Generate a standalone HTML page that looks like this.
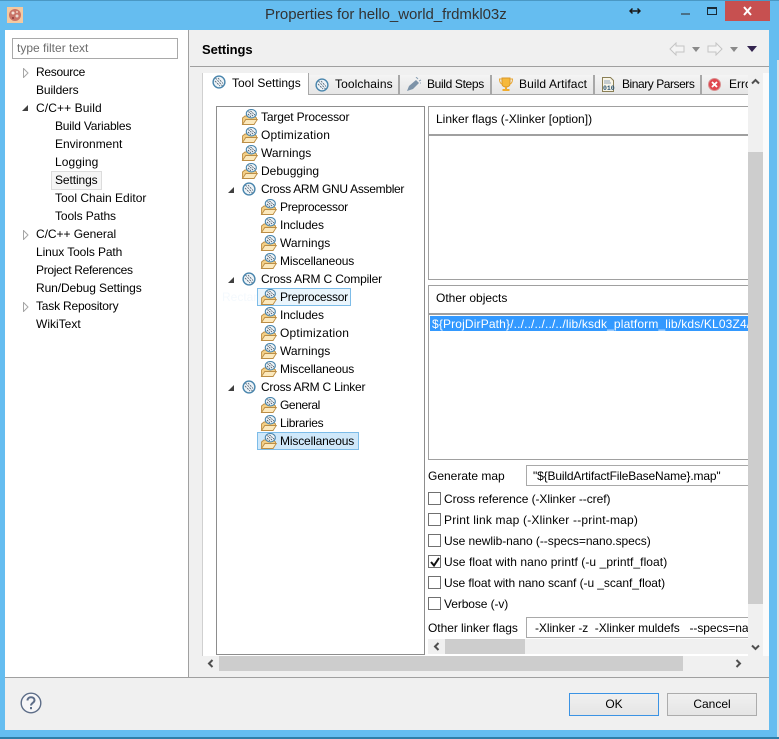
<!DOCTYPE html>
<html><head><meta charset="utf-8">
<style>
html,body{margin:0;padding:0}
body{width:779px;height:739px;overflow:hidden;position:relative;background:#65bdf0;font-family:"Liberation Sans",sans-serif;font-size:12px;color:#000}
div,span,svg{position:absolute}
.t{white-space:nowrap;line-height:18px;height:18px;font-size:12px;letter-spacing:0}
.ck{width:11px;height:11px;border:1px solid #707070;background:#fff;left:428px}
.tab{top:75px;height:19px;background:linear-gradient(#f4f4f4,#e6e6e6);border-right:2px solid #a8a8a8;border-bottom:1px solid #a8a8a8}
.tt{top:75px}
</style></head><body>
<svg width="0" height="0" style="left:0;top:0">
<defs>
<symbol id="g" viewBox="0 0 14 14"><circle cx="7" cy="7" r="5.900" fill="#eef4f8" stroke="#4a86ad" stroke-width="1.400"/><path d="M3.500 3L10.500 11M6 3L11 8.500M3 6L8 11" stroke="#5a6b7c" stroke-width=".9" stroke-dasharray="2 1"/></symbol>
<symbol id="f" viewBox="0 0 17 17"><path d="M1.500 9L4 7h9l2.500 2v1l-2.500 5.500H1.500z" fill="#f3cf86" stroke="#bc8e45" stroke-width=".9"/><path d="M1.500 15.500L4.800 10.500H16.300L13 15.500z" fill="#fce9bd" stroke="#bc8e45" stroke-width=".9"/><ellipse cx="10.300" cy="4.700" rx="5" ry="4.200" fill="#eef4f8" stroke="#4a86ad" stroke-width="1.100"/><path d="M7.500 2.500L12.500 7.500M9.500 2L14 6M7 5L10 8" stroke="#4c5a68" stroke-width=".9" stroke-dasharray="1.600 .8"/></symbol>
</defs></svg>

<div style="left:0;top:0;width:779px;height:1px;background:#4a98c4"></div>
<div style="left:0;top:737px;width:779px;height:2px;background:#2f7ea8"></div>
<div style="left:777px;top:60px;width:2px;height:677px;background:#d8dfe4"></div>

<!-- title bar -->
<svg style="left:7px;top:7px" width="16" height="16" viewBox="0 0 16 16"><rect width="16" height="16" fill="#f4c9a0"/><circle cx="8" cy="8" r="6" fill="#c97468"/><circle cx="6" cy="6" r="1.500" fill="#f3e3d8"/><circle cx="10" cy="9" r="1.500" fill="#e8d8d0"/><circle cx="6" cy="11" r="1" fill="#8a3a3a"/><circle cx="10" cy="5" r="1" fill="#f0d0c0"/></svg>
<div class="t" style="left:265px;top:6px;font-size:15px;color:#333;letter-spacing:-.05px">Properties for hello_world_frdmkl03z</div>
<svg style="left:629px;top:5px" width="12" height="12" viewBox="0 0 12 12"><path d="M1 6h10M3.500 3.500L1 6l2.500 2.500M8.500 3.500L11 6 8.500 8.500" fill="none" stroke="#1a1a1a" stroke-width="1.500"/></svg>
<div style="left:681px;top:13px;width:9px;height:2px;background:#4a7188"></div>
<div style="left:707px;top:7px;width:8px;height:5px;border:1px solid #1a2a35;border-top-width:2px"></div>
<div style="left:725px;top:1px;width:45px;height:20px;background:#c75050"></div>
<svg style="left:742px;top:6px" width="11" height="10" viewBox="0 0 11 10"><path d="M2 1l7 8M9 1L2 9" stroke="#fff" stroke-width="2"/></svg>

<!-- client -->
<div style="left:5px;top:30px;width:764px;height:700px;background:#f0f0f0"></div>
<div style="left:5px;top:30px;width:183px;height:647px;background:#fff"></div>
<div style="left:188px;top:30px;width:1px;height:647px;background:#a0a0a0"></div>
<div style="left:5px;top:677px;width:764px;height:1px;background:#a0a0a0"></div>
<div style="left:190px;top:66px;width:579px;height:1px;background:#a0a0a0"></div>

<!-- left tree -->
<div style="left:12px;top:38px;width:164px;height:19px;border:1px solid #a9a9a9;background:#fff"></div>
<div class="t" style="left:17px;top:39px;color:#6d6d6d">type filter text</div>
<svg style="left:23px;top:68px" width="6" height="10" viewBox="0 0 6 10"><path d="M.500.500L5 5 .500 9.500z" fill="#fff" stroke="#a6a6a6"/></svg>
<svg style="left:22px;top:104px" width="7" height="7" viewBox="0 0 7 7"><path d="M0 7L6 1v6z" fill="#404040"/></svg>
<svg style="left:23px;top:230px" width="6" height="10" viewBox="0 0 6 10"><path d="M.500.500L5 5 .500 9.500z" fill="#fff" stroke="#a6a6a6"/></svg>
<svg style="left:23px;top:302px" width="6" height="10" viewBox="0 0 6 10"><path d="M.500.500L5 5 .500 9.500z" fill="#fff" stroke="#a6a6a6"/></svg>
<div style="left:51px;top:171px;width:49px;height:17px;background:#f5f5f5;border:1px solid #dcdcdc"></div>
<div class="t" style="left:36px;top:63px;letter-spacing:-.3px">Resource</div>
<div class="t" style="left:36px;top:81px;letter-spacing:-.1px">Builders</div>
<div class="t" style="left:36px;top:99px;letter-spacing:.1px">C/C++ Build</div>
<div class="t" style="left:55px;top:117px;letter-spacing:-.2px">Build Variables</div>
<div class="t" style="left:55px;top:135px">Environment</div>
<div class="t" style="left:55px;top:153px;letter-spacing:.1px">Logging</div>
<div class="t" style="left:55px;top:171px;letter-spacing:-.1px">Settings</div>
<div class="t" style="left:55px;top:189px">Tool Chain Editor</div>
<div class="t" style="left:55px;top:207px;letter-spacing:-.1px">Tools Paths</div>
<div class="t" style="left:36px;top:225px;letter-spacing:-.05px">C/C++ General</div>
<div class="t" style="left:36px;top:243px;letter-spacing:-.1px">Linux Tools Path</div>
<div class="t" style="left:36px;top:261px;letter-spacing:-.3px">Project References</div>
<div class="t" style="left:36px;top:279px;letter-spacing:-.1px">Run/Debug Settings</div>
<div class="t" style="left:36px;top:297px;letter-spacing:-.2px">Task Repository</div>
<div class="t" style="left:36px;top:315px">WikiText</div>

<!-- header -->
<div class="t" style="left:202px;top:41px;font-size:13px;font-weight:bold;letter-spacing:-.1px">Settings</div>
<svg style="left:669px;top:42px" width="16" height="14" viewBox="0 0 16 14"><path d="M1 7l6-6v3h8v6H7v3z" fill="#f4f4f4" stroke="#c4c4c4"/></svg>
<svg style="left:692px;top:47px" width="8" height="5" viewBox="0 0 8 5"><path d="M0 0h8L4 5z" fill="#8a8a8a"/></svg>
<svg style="left:707px;top:42px" width="16" height="14" viewBox="0 0 16 14"><path d="M15 7L9 1v3H1v6h8v3z" fill="#f4f4f4" stroke="#c4c4c4"/></svg>
<svg style="left:730px;top:47px" width="8" height="5" viewBox="0 0 8 5"><path d="M0 0h8L4 5z" fill="#8a8a8a"/></svg>
<svg style="left:747px;top:46px" width="10" height="6" viewBox="0 0 10 6"><path d="M0 0h10L5 6z" fill="#33244f"/></svg>

<!-- tabs -->
<div style="left:203px;top:95px;width:545px;height:561px;background:#fff"></div>
<div style="left:202px;top:73px;width:1px;height:583px;background:#d0d0d0"></div>
<div style="left:203px;top:73px;width:105px;height:23px;background:#fff"></div>
<div style="left:308px;top:73px;width:1px;height:22px;background:#a8a8a8"></div>
<div class="tab" style="left:309px;width:89px"></div>
<div class="tab" style="left:400px;width:90px"></div>
<div class="tab" style="left:492px;width:101px"></div>
<div class="tab" style="left:595px;width:105px"></div>
<div class="tab" style="left:702px;width:46px;border-right:0"></div>
<svg style="left:212px;top:75px" width="14" height="14"><use href="#g"/></svg>
<svg style="left:315px;top:78px" width="14" height="14"><use href="#g"/></svg>
<svg style="left:406px;top:77px" width="16" height="15" viewBox="0 0 16 15"><path d="M1 14l2-5 7-6 3 3-6 6z" fill="#7d93a8"/><path d="M11 2l1-1M13 4l2-1M14 6h1M10 1l1-1" stroke="#8aa0b4"/></svg>
<svg style="left:498px;top:77px" width="16" height="15" viewBox="0 0 16 15"><path d="M4 1h8v6c0 2-2 3-4 3S4 9 4 7z" fill="#f6b93b" stroke="#d9982a"/><path d="M4 2H1.500c0 3 1 4.500 2.500 5M12 2h2.500c0 3-1 4.500-2.500 5" fill="none" stroke="#e8a632"/><path d="M7 10h2v2H7zM4.500 12h7v2h-7z" fill="#f0ac2e"/></svg>
<svg style="left:601px;top:77px" width="15" height="15" viewBox="0 0 15 15"><path d="M1.500.500h8l3 3v11h-11z" fill="#f8f5e8" stroke="#8a7f55"/><path d="M3 4h6M3 6h7" stroke="#8fa3b8"/><text x="2" y="13" font-size="6.500" font-family="Liberation Mono" fill="#27506f" font-weight="bold">010</text></svg>
<svg style="left:708px;top:78px" width="13" height="13" viewBox="0 0 13 13"><circle cx="6.500" cy="6.500" r="6" fill="#e0464f" stroke="#d89090"/><path d="M4 4l5 5M9 4L4 9" stroke="#fff" stroke-width="1.800"/></svg>
<div class="t" style="left:232px;top:74px">Tool Settings</div>
<div class="t tt" style="left:335px;letter-spacing:.1px">Toolchains</div>
<div class="t tt" style="left:427px;letter-spacing:-.35px">Build Steps</div>
<div class="t tt" style="left:519px;letter-spacing:.1px">Build Artifact</div>
<div class="t tt" style="left:622px;letter-spacing:-.45px">Binary Parsers</div>
<div class="t tt" style="left:729px;width:19px;overflow:hidden">Errors</div>

<!-- middle tree -->
<div style="left:216px;top:106px;width:207px;height:547px;border:1px solid #8d8d8d;background:#fff"></div>
<div class="t" style="left:222px;top:288px;color:#f4f9fd">Rectangular Snip</div>
<div style="left:257px;top:288px;width:92px;height:16px;border:1px solid #7dbce8;background:#eaf5fc"></div>
<div style="left:257px;top:432px;width:100px;height:16px;border:1px solid #7dbce8;background:#cfe8fa"></div>

<svg style="left:241px;top:109px" width="17" height="17"><use href="#f"/></svg>
<svg style="left:241px;top:127px" width="17" height="17"><use href="#f"/></svg>
<svg style="left:241px;top:145px" width="17" height="17"><use href="#f"/></svg>
<svg style="left:241px;top:163px" width="17" height="17"><use href="#f"/></svg>
<svg style="left:242px;top:182px" width="14" height="14"><use href="#g"/></svg>
<svg style="left:260px;top:199px" width="17" height="17"><use href="#f"/></svg>
<svg style="left:260px;top:217px" width="17" height="17"><use href="#f"/></svg>
<svg style="left:260px;top:235px" width="17" height="17"><use href="#f"/></svg>
<svg style="left:260px;top:253px" width="17" height="17"><use href="#f"/></svg>
<svg style="left:242px;top:272px" width="14" height="14"><use href="#g"/></svg>
<svg style="left:260px;top:289px" width="17" height="17"><use href="#f"/></svg>
<svg style="left:260px;top:307px" width="17" height="17"><use href="#f"/></svg>
<svg style="left:260px;top:325px" width="17" height="17"><use href="#f"/></svg>
<svg style="left:260px;top:343px" width="17" height="17"><use href="#f"/></svg>
<svg style="left:260px;top:361px" width="17" height="17"><use href="#f"/></svg>
<svg style="left:242px;top:380px" width="14" height="14"><use href="#g"/></svg>
<svg style="left:260px;top:397px" width="17" height="17"><use href="#f"/></svg>
<svg style="left:260px;top:415px" width="17" height="17"><use href="#f"/></svg>
<svg style="left:260px;top:433px" width="17" height="17"><use href="#f"/></svg>
<svg style="left:228px;top:186px" width="7" height="7" viewBox="0 0 7 7"><path d="M0 7L6 1v6z" fill="#404040"/></svg>
<svg style="left:228px;top:276px" width="7" height="7" viewBox="0 0 7 7"><path d="M0 7L6 1v6z" fill="#404040"/></svg>
<svg style="left:228px;top:384px" width="7" height="7" viewBox="0 0 7 7"><path d="M0 7L6 1v6z" fill="#404040"/></svg>

<div class="t" style="left:261px;top:108px;letter-spacing:-.15px">Target Processor</div>
<div class="t" style="left:261px;top:126px;letter-spacing:.2px">Optimization</div>
<div class="t" style="left:261px;top:144px">Warnings</div>
<div class="t" style="left:261px;top:162px">Debugging</div>
<div class="t" style="left:261px;top:180px;letter-spacing:-.3px">Cross ARM GNU Assembler</div>
<div class="t" style="left:280px;top:198px;letter-spacing:-.3px">Preprocessor</div>
<div class="t" style="left:280px;top:216px;letter-spacing:-.1px">Includes</div>
<div class="t" style="left:280px;top:234px">Warnings</div>
<div class="t" style="left:280px;top:252px;letter-spacing:-.15px">Miscellaneous</div>
<div class="t" style="left:261px;top:270px;letter-spacing:-.15px">Cross ARM C Compiler</div>
<div class="t" style="left:280px;top:288px;letter-spacing:-.3px">Preprocessor</div>
<div class="t" style="left:280px;top:306px;letter-spacing:-.1px">Includes</div>
<div class="t" style="left:280px;top:324px;letter-spacing:.2px">Optimization</div>
<div class="t" style="left:280px;top:342px">Warnings</div>
<div class="t" style="left:280px;top:360px;letter-spacing:-.15px">Miscellaneous</div>
<div class="t" style="left:261px;top:378px;letter-spacing:-.25px">Cross ARM C Linker</div>
<div class="t" style="left:280px;top:396px;letter-spacing:-.4px">General</div>
<div class="t" style="left:280px;top:414px;letter-spacing:-.3px">Libraries</div>
<div class="t" style="left:280px;top:432px;letter-spacing:-.15px">Miscellaneous</div>

<!-- right pane -->
<div style="left:428px;top:106px;width:320px;height:172px;border:1px solid #a0a0a0;border-right:0"></div>
<div style="left:429px;top:134px;width:319px;height:2px;background:#a0a0a0"></div>
<div class="t" style="left:436px;top:110px">Linker flags (-Xlinker [option])</div>
<div style="left:428px;top:285px;width:320px;height:173px;border:1px solid #a0a0a0;border-right:0"></div>
<div style="left:429px;top:313px;width:319px;height:2px;background:#a0a0a0"></div>
<div class="t" style="left:436px;top:289px">Other objects</div>
<div style="left:430px;top:316px;width:318px;height:15px;background:#3399ff"></div>
<div class="t" style="left:432px;top:315px;color:#fff;width:316px;overflow:hidden;letter-spacing:.15px">${ProjDirPath}/../../../../../lib/ksdk_platform_lib/kds/KL03Z4/debug/libksdk_platform.a</div>

<div class="t" style="left:428px;top:467px">Generate map</div>
<div style="left:526px;top:465px;width:222px;height:19px;border:1px solid #a9a9a9;border-right:0;background:#fff"></div>
<div class="t" style="left:533px;top:467px;width:215px;overflow:hidden;letter-spacing:-.15px">"${BuildArtifactFileBaseName}.map"</div>

<div class="ck" style="top:492px"></div><div class="t" style="left:444px;top:490px;letter-spacing:-.07px">Cross reference (-Xlinker --cref)</div>
<div class="ck" style="top:513px"></div><div class="t" style="left:444px;top:511px;letter-spacing:.2px">Print link map (-Xlinker --print-map)</div>
<div class="ck" style="top:534px"></div><div class="t" style="left:444px;top:532px;letter-spacing:-.05px">Use newlib-nano (--specs=nano.specs)</div>
<div class="ck" style="top:555px"></div><svg style="left:429px;top:556px" width="12" height="12" viewBox="0 0 12 12"><path d="M2 6l3 3.500L10 2" fill="none" stroke="#111" stroke-width="2"/></svg><div class="t" style="left:444px;top:553px;letter-spacing:.07px">Use float with nano printf (-u _printf_float)</div>
<div class="ck" style="top:576px"></div><div class="t" style="left:444px;top:574px;letter-spacing:-.07px">Use float with nano scanf (-u _scanf_float)</div>
<div class="ck" style="top:597px"></div><div class="t" style="left:444px;top:595px;letter-spacing:-.1px">Verbose (-v)</div>

<div class="t" style="left:428px;top:619px;letter-spacing:-.05px">Other linker flags</div>
<div style="left:526px;top:617px;width:222px;height:19px;border:1px solid #a9a9a9;border-right:0;background:#fff"></div>
<div class="t" style="left:535px;top:619px;width:213px;overflow:hidden;letter-spacing:-.07px">-Xlinker -z&nbsp; -Xlinker muldefs&nbsp;&nbsp; --specs=nano.specs</div>

<!-- inner horizontal scrollbar -->
<div style="left:428px;top:639px;width:320px;height:15px;background:#f0f0f0"></div>
<div style="left:445px;top:639px;width:80px;height:15px;background:#cdcdcd"></div>
<svg style="left:433px;top:642px" width="7" height="9" viewBox="0 0 7 9"><path d="M5.500 1L2 4.500 5.500 8" fill="none" stroke="#505050" stroke-width="2"/></svg>

<!-- vertical scrollbar -->
<div style="left:748px;top:73px;width:15px;height:583px;background:#f0f0f0"></div>
<div style="left:763px;top:73px;width:6px;height:583px;background:#fbfbfb"></div>
<div style="left:748px;top:152px;width:15px;height:452px;background:#cdcdcd"></div>
<svg style="left:751px;top:78px" width="9" height="7" viewBox="0 0 9 7"><path d="M1 5.500L4.500 2 8 5.500" fill="none" stroke="#505050" stroke-width="2"/></svg>
<svg style="left:751px;top:644px" width="9" height="7" viewBox="0 0 9 7"><path d="M1 1.500L4.500 5 8 1.500" fill="none" stroke="#505050" stroke-width="2"/></svg>

<!-- outer horizontal scrollbar -->
<div style="left:219px;top:656px;width:464px;height:15px;background:#cdcdcd"></div>
<svg style="left:207px;top:659px" width="7" height="9" viewBox="0 0 7 9"><path d="M5.500 1L2 4.500 5.500 8" fill="none" stroke="#505050" stroke-width="2"/></svg>
<svg style="left:735px;top:659px" width="7" height="9" viewBox="0 0 7 9"><path d="M1.500 1L5 4.500 1.500 8" fill="none" stroke="#505050" stroke-width="2"/></svg>

<!-- footer -->
<svg style="left:20px;top:692px" width="22" height="22" viewBox="0 0 22 22"><circle cx="11" cy="11" r="9.800" fill="#f6f6f8" stroke="#5d6d88" stroke-width="1.400"/><path d="M7.500 8.500c0-2 1.500-3.300 3.500-3.300s3.500 1.300 3.500 3c0 2.500-3.500 2.800-3.500 5.300" fill="none" stroke="#5d6d88" stroke-width="2"/><rect x="10" y="15" width="2" height="2.200" fill="#5d6d88"/></svg>
<div style="left:569px;top:693px;width:88px;height:21px;border:1px solid #3b93e4;background:linear-gradient(#f0f0f0,#e5e5e5)"></div>
<div class="t" style="left:569px;top:695px;width:90px;text-align:center">OK</div>
<div style="left:667px;top:693px;width:88px;height:21px;border:1px solid #acacac;background:linear-gradient(#f0f0f0,#e5e5e5)"></div>
<div class="t" style="left:667px;top:695px;width:90px;text-align:center">Cancel</div>
</body></html>
